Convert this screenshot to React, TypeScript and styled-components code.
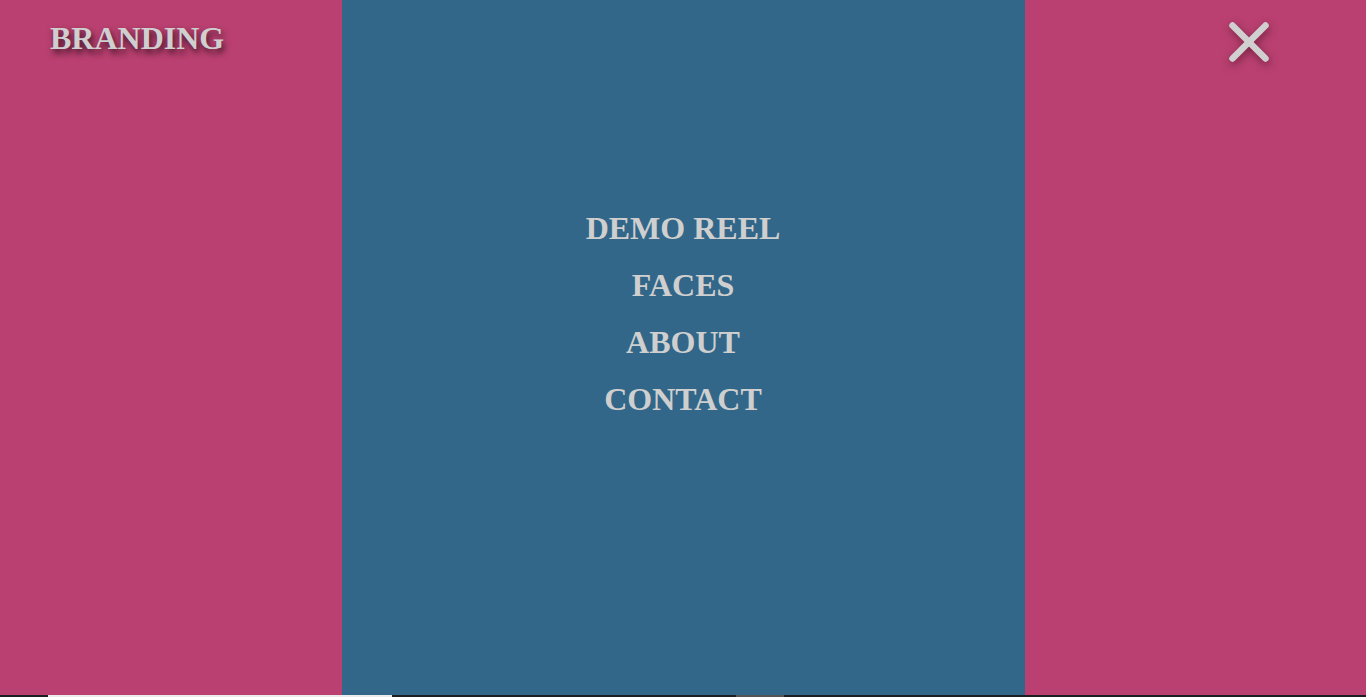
import React from "react";
import styled, { createGlobalStyle } from "styled-components";

const Global = createGlobalStyle`
  html, body { margin: 0; padding: 0; background: #1c1f21; overflow: hidden; }
  body { font-family: "Liberation Serif", "Times New Roman", serif; }
`;

const Page = styled.div`
  display: flex;
  flex-direction: column;
  width: 1366px;
  height: 697px;
`;

const Overlay = styled.div`
  display: grid;
  grid-template-columns: 1fr 2fr 1fr;
  height: 695px;
  flex-shrink: 0;
`;

const Panel = styled.div<{ $tone: "pink" | "blue"; $align?: string }>`
  background: ${(p) => (p.$tone === "pink" ? "#b94070" : "#336789")};
  display: flex;
  justify-content: ${(p) => p.$align || "flex-start"};
  align-items: flex-start;
`;

const SidePanel = styled(Panel)`
  padding: 20px 50px;
  box-sizing: border-box;
`;

const ClosePanel = styled(Panel)`
  padding: 20px 95px 0 0;
  box-sizing: border-box;
`;

const Brand = styled.div`
  font-family: "Liberation Serif", "Times New Roman", serif;
  font-weight: bold;
  font-size: 32px;
  color: #cfcfcf;
  text-shadow: 2px 4px 6px rgba(40, 10, 25, 0.85);
  line-height: normal;
`;

const Menu = styled.nav`
  flex: 1;
  display: flex;
  flex-direction: column;
  align-items: center;
  padding-top: 200px;
`;

const MenuItem = styled.a`
  font-family: "Liberation Serif", "Times New Roman", serif;
  font-weight: bold;
  font-size: 32px;
  line-height: 57px;
  color: #cfcfcf;
  text-decoration: none;
`;

const CloseButton = styled.button`
  background: none;
  border: none;
  padding: 0;
  width: 44px;
  height: 44px;
  display: block;
  filter: drop-shadow(1px 3px 4px rgba(60, 10, 30, 0.55));
`;

const Strip = styled.div`
  display: flex;
  height: 2px;
  flex-shrink: 0;
  background: #1c1f21;
`;

const Segment = styled.div<{ $w: number; $c: string }>`
  width: ${(p) => p.$w}px;
  background: ${(p) => p.$c};
  flex-shrink: 0;
`;

export default function App() {
  return (
    <>
      <Global />
      <Page>
        <Overlay>
          <SidePanel $tone="pink">
            <Brand>BRANDING</Brand>
          </SidePanel>
          <Panel $tone="blue">
            <Menu>
              <MenuItem>DEMO REEL</MenuItem>
              <MenuItem>FACES</MenuItem>
              <MenuItem>ABOUT</MenuItem>
              <MenuItem>CONTACT</MenuItem>
            </Menu>
          </Panel>
          <ClosePanel $tone="pink" $align="flex-end">
            <CloseButton aria-label="Close">
              <svg width="44" height="44" viewBox="0 0 44 44">
                <g stroke="#d0d0d0" strokeWidth="6.5" strokeLinecap="round">
                  <line x1="5.5" y1="5.5" x2="38.5" y2="38.5" />
                  <line x1="38.5" y1="5.5" x2="5.5" y2="38.5" />
                </g>
              </svg>
            </CloseButton>
          </ClosePanel>
        </Overlay>
        <Strip>
          <Segment $w={48} $c="#1c1f21" />
          <Segment $w={344} $c="#ececec" />
          <Segment $w={344} $c="#1c1f21" />
          <Segment $w={48} $c="#555555" />
        </Strip>
      </Page>
    </>
  );
}
